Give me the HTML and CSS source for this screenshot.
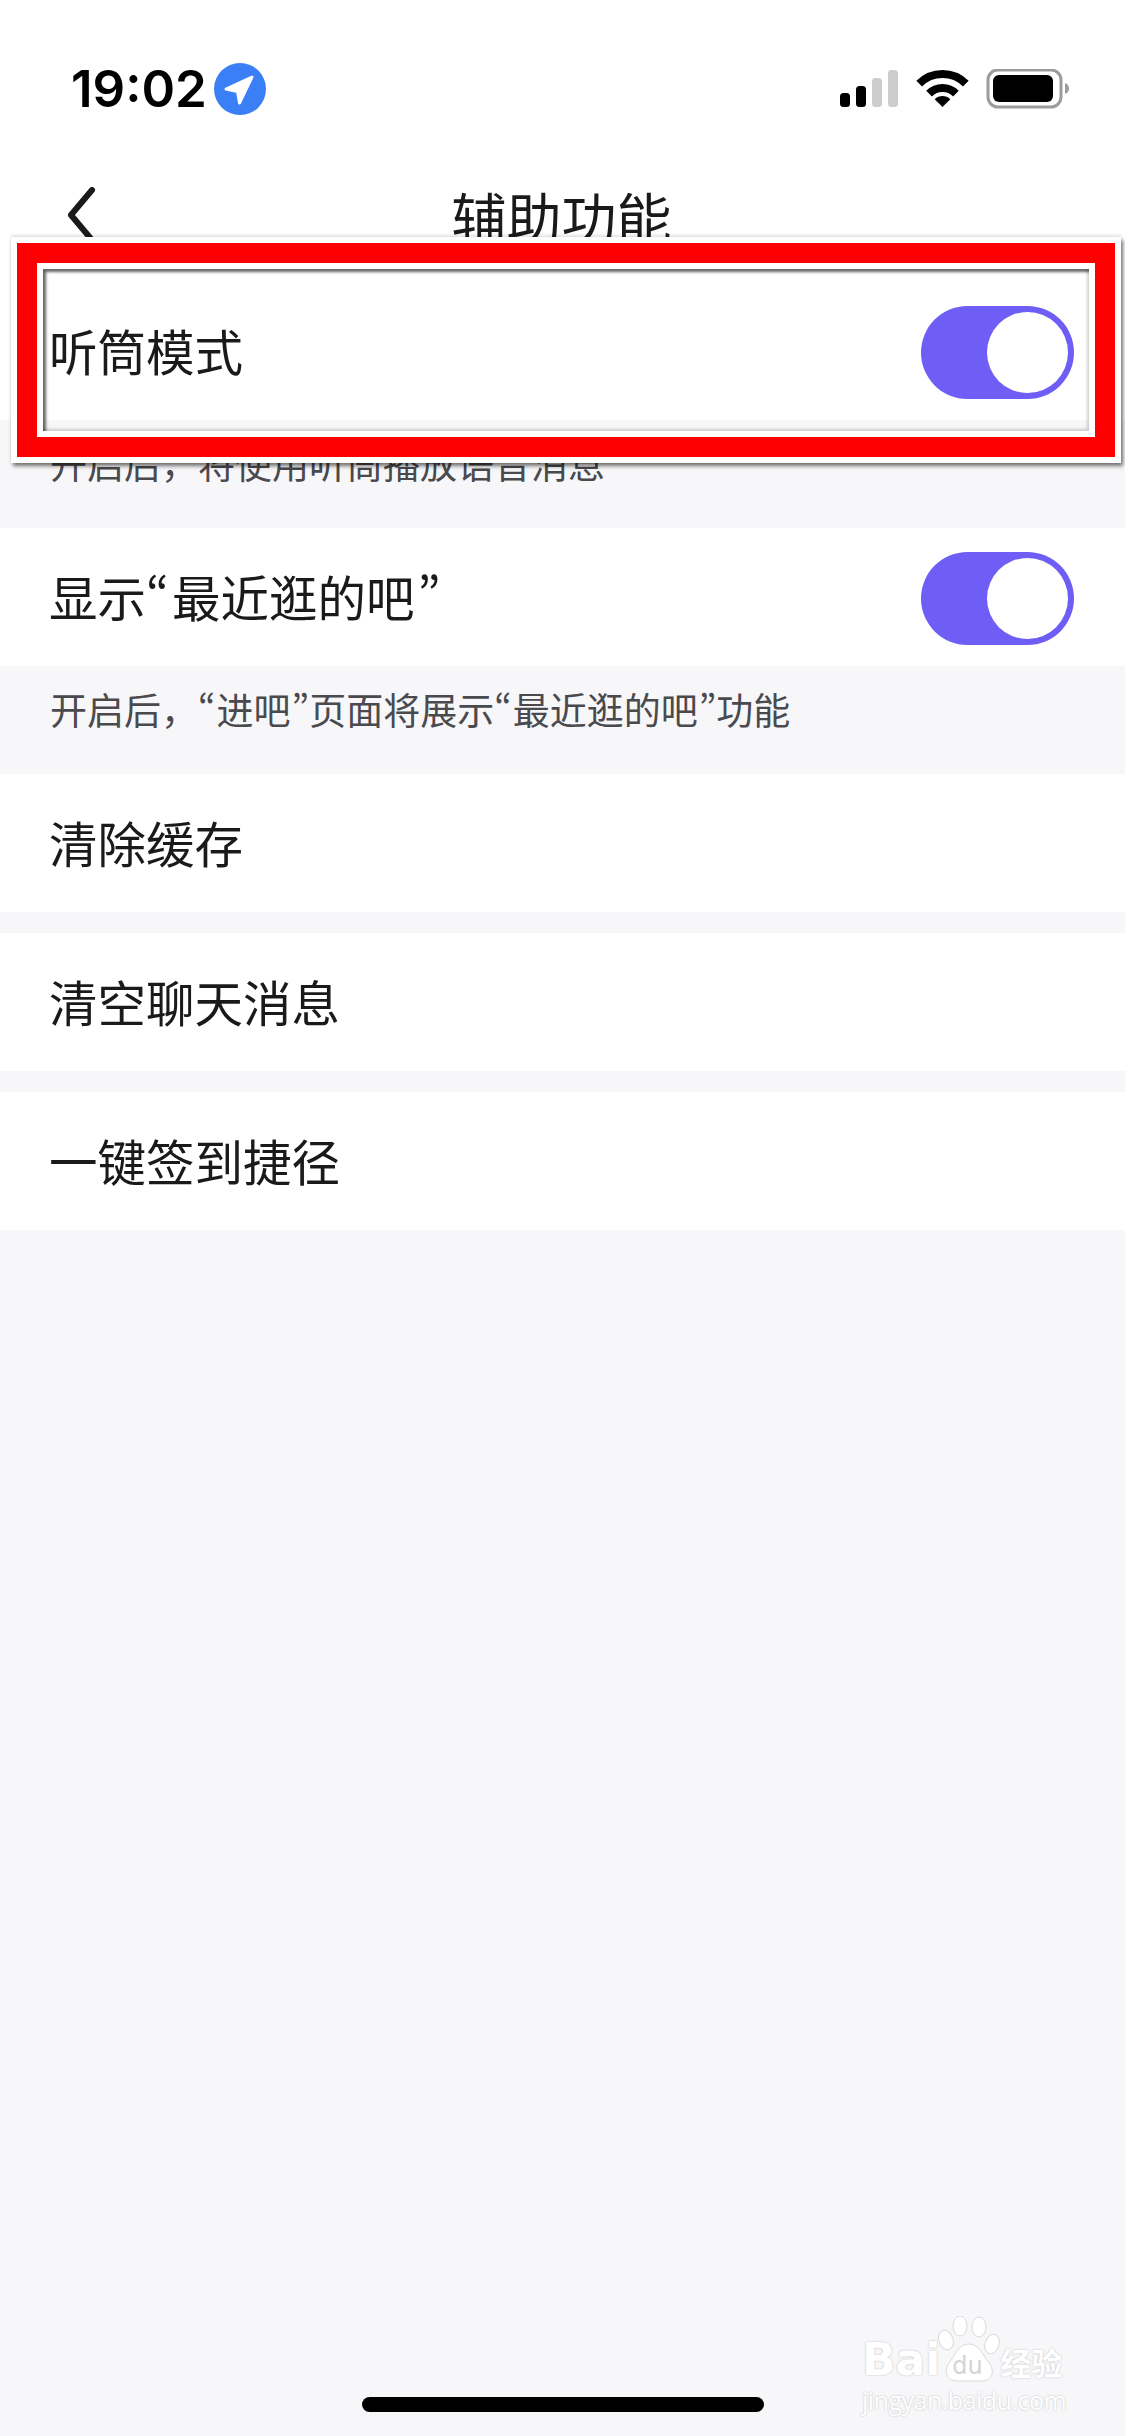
FILE: index.html
```html
<!DOCTYPE html>
<html lang="zh-CN">
	<head>
		<meta charset="utf-8">
		<title>辅助功能</title>
		<link rel="stylesheet" href="styles.css">
	</head>
	<body>
		<div id="screen">
			<div id="status-bar">
				<div id="status-left">
					<span id="time">19:02</span>
					<svg class="location" width="52" height="52" viewBox="0 0 52 52">
						<circle cx="26" cy="26" r="26" fill="#3a7ff6"/>
						<path d="M38 14 L12 26 L23.5 28.5 L25.5 40 Z" fill="#fff" stroke="#fff" stroke-width="3" stroke-linejoin="round"/>
					</svg>
				</div>
				<svg class="status-icons" width="230" height="40" viewBox="0 0 230 40">
					<rect x="1" y="24" width="10" height="14" rx="3.5" fill="#000"/>
					<rect x="17" y="17" width="10" height="21" rx="3.5" fill="#000"/>
					<rect x="33" y="9" width="10" height="29" rx="3.5" fill="#ccc"/>
					<rect x="49" y="1" width="10" height="37" rx="3.5" fill="#ccc"/>
					<g transform="translate(78 1)">
						<path d="M2.2 13.7 A33 33 0 0 1 48.8 13.7" fill="none" stroke="#000" stroke-width="8"/>
						<path d="M12.07 23.57 A19 19 0 0 1 38.93 23.57" fill="none" stroke="#000" stroke-width="8"/>
						<path d="M25.5 37 L17.7 29.2 A11 11 0 0 1 33.3 29.2 Z" fill="#000"/>
					</g>
					<rect x="149" y="1" width="73" height="37" rx="10" fill="none" stroke="#9c9c9c" stroke-width="3"/>
					<rect x="154" y="6" width="60" height="27" rx="6" fill="#000"/>
					<path d="M226 14 C229 15 230 17 230 19.500 C230 22 229 24 226 25 Z" fill="#9c9c9c"/>
				</svg>
			</div>
			<div id="nav-bar">
				<svg class="back" width="30" height="58" viewBox="0 0 30 58">
					<path d="M26 3 L5 28 L26 53" fill="none" stroke="#1a1a1a" stroke-width="6" stroke-linecap="round" stroke-linejoin="round"/>
				</svg>
				<span id="nav-title">辅助功能</span>
			</div>

			<div class="row">
				<span class="row-label">听筒模式</span>
				<div class="switch"><div class="knob"></div></div>
			</div>
			<p class="hint">开启后，将使用听筒播放语音消息</p>
			<div class="row">
				<span class="row-label">显示<span class="quote open">“</span>最近逛的吧<span class="quote close">”</span></span>
				<div class="switch"><div class="knob"></div></div>
			</div>
			<p class="hint">开启后，<span class="quote open">“</span>进吧<span class="quote close">”</span>页面将展示<span class="quote open">“</span>最近逛的吧<span class="quote close">”</span>功能</p>
			<div class="row">
				<span class="row-label">清除缓存</span>
			</div>
			<div class="row spaced">
				<span class="row-label">清空聊天消息</span>
			</div>
			<div class="row spaced">
				<span class="row-label">一键签到捷径</span>
			</div>

			<div id="home-bar"></div>

			<!-- red annotation frame over the first row -->
			<div id="mark">
				<div id="mark-red">
					<div id="mark-inner"></div>
				</div>
			</div>

			<!-- watermark -->
			<div id="watermark">
				<div class="wm-top">
					<span class="wm-bai">Bai</span>
					<div class="wm-paw">
						<svg width="62" height="66" viewBox="0 0 62 66">
							<g fill="#fff" stroke="#d9d9dc" stroke-width="1">
								<ellipse cx="8" cy="24" rx="7" ry="10" transform="rotate(-20 8 24)"/>
								<ellipse cx="22" cy="10" rx="7" ry="10"/>
								<ellipse cx="41" cy="11" rx="7" ry="10"/>
								<ellipse cx="54" cy="28" rx="7" ry="10" transform="rotate(20 54 28)"/>
								<path d="M31 28 C20 28 17 40 11 47 C6 54 8 65 19 65 L44 65 C55 65 57 54 51 47 C45 40 42 28 31 28 Z"/>
							</g>
						</svg>
						<span class="wm-du">du</span>
					</div>
					<span class="wm-cn">经验</span>
				</div>
				<div class="wm-url">jingyan.baidu.com</div>
			</div>
		</div>
	</body>
</html>
```

FILE: styles.css
```css
* {
	box-sizing: border-box;
}
html, body {
	margin: 0;
	padding: 0;
}
body {
	background-color: #f7f7f9;
	font-family: "Noto Sans CJK SC", "Noto Sans", sans-serif;
}
#screen {
	display: flex;
	flex-direction: column;
	height: 2436px;
	overflow: hidden;
	position: relative;
}

/* status bar */
#status-bar {
	align-items: flex-start;
	background-color: #fff;
	display: flex;
	height: 160px;
	justify-content: space-between;
	padding: 63px 56px 0 71px;
}
#status-left {
	align-items: center;
	display: flex;
	gap: 7px;
}
#time {
	color: #000;
	font-family: Inter, "Liberation Sans", sans-serif;
	font-size: 51px;
	font-weight: 600;
	line-height: 52px;
}
.status-icons {
	margin-top: 6px;
}

/* nav */
#nav-bar {
	align-items: center;
	background-color: #fff;
	display: flex;
	height: 122px;
	justify-content: center;
	position: relative;
}
#nav-title {
	color: #1a1a1a;
	font-size: 55px;
	line-height: 70px;
	margin: 0 2px 13px 0;
}
.back {
	left: 66px;
	position: absolute;
	top: 27px;
}

/* rows */
.row {
	align-items: center;
	background-color: #fff;
	display: flex;
	flex-shrink: 0;
	height: 138px;
	justify-content: space-between;
	padding: 0 51px 0 49px;
}
.row.spaced {
	margin-top: 21px;
}
.row-label {
	color: #1a1a1a;
	font-size: 48.500px;
	line-height: 60px;
	margin-bottom: 2px;
}
/* the curly quotes are narrower than a full em in the reference */
.quote {
	font-feature-settings: "pwid";
}
.row-label .quote.open {
	margin-right: 3px;
}
.row-label .quote.close {
	margin-left: 3px;
}
.hint .quote.open {
	margin-right: 1px;
}
.hint .quote.close {
	margin-left: 1px;
}
.hint {
	color: #4a4a4e;
	font-size: 37px;
	height: 108px;
	line-height: 48px;
	margin: 0;
	padding: 19px 50px 0;
}
.switch {
	background-color: #6e5ef5;
	border-radius: 47px;
	display: flex;
	height: 93px;
	justify-content: flex-end;
	margin-top: 3px;
	padding: 6px;
	width: 153px;
}
.knob {
	background-color: #fff;
	border-radius: 50%;
	height: 81px;
	width: 81px;
}

#home-bar {
	background-color: #000;
	border-radius: 8px;
	height: 15px;
	margin: auto auto 24px;
	width: 402px;
}

/* annotation frame */
#mark {
	border: 6px solid #fff;
	box-shadow: 2px 3px 4px rgba(0, 0, 0, 0.55), 0 -2px 3px rgba(0, 0, 0, 0.1);
	height: 226px;
	left: 11px;
	position: absolute;
	top: 237px;
	width: 1110px;
}
#mark-red {
	border: 20px solid #f00;
	height: 100%;
}
#mark-inner {
	border: 6px solid #fff;
	box-shadow: inset 3px 3px 3px rgba(0, 0, 0, 0.6), inset -2px -2px 3px rgba(0, 0, 0, 0.18);
	height: 100%;
}

/* watermark */
#watermark {
	color: #fff;
	left: 862px;
	position: absolute;
	text-shadow: 0 0 2px #b8b8bc;
	top: 2316px;
	width: 210px;
}
.wm-top {
	align-items: flex-end;
	display: flex;
	height: 66px;
}
.wm-bai {
	font-family: "DejaVu Sans", sans-serif;
	font-size: 44px;
	font-weight: 700;
	line-height: 44px;
	margin-right: -2px;
}
.wm-paw {
	height: 66px;
	position: relative;
	width: 62px;
}
.wm-du {
	bottom: 4px;
	color: #d4d4d6;
	font-family: "DejaVu Sans", sans-serif;
	font-size: 24px;
	left: 14px;
	line-height: 24px;
	position: absolute;
	text-shadow: none;
}
.wm-cn {
	font-size: 31px;
	font-weight: 700;
	line-height: 40px;
	white-space: nowrap;
}
.wm-url {
	font-family: "Open Sans", sans-serif;
	font-size: 25px;
	letter-spacing: -0.5px;
	line-height: 30px;
	margin-top: 3px;
	white-space: nowrap;
}
```
